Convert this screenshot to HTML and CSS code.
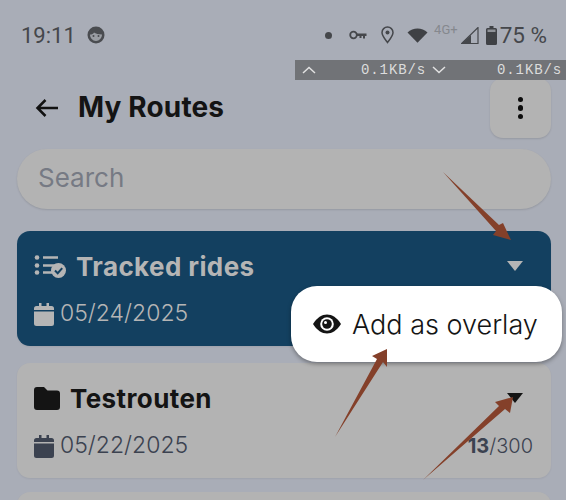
FILE: index.html
```html
<!DOCTYPE html>
<html lang="en">
<head>
    <meta charset="UTF-8">
    <title>My Routes</title>
    <link rel="stylesheet" href="styles.css">
</head>
<body>
<div class="status-bar">
    <span class="status-time">19:11</span>
    <svg class="status-face" width="18" height="18" viewBox="0 0 18 18">
        <circle cx="9" cy="9" r="8.500" fill="#4a4c50"/>
        <path d="M3 8.500c2 0 3.200-.5 4-2 1.500 1.300 4.500 2 8 2 0 3.500-2.700 6.500-6 6.500s-6-3-6-6.500z" fill="#9a9da3"/>
        <circle cx="6.500" cy="10" r="1" fill="#4a4c50"/>
        <circle cx="11.500" cy="10" r="1" fill="#4a4c50"/>
    </svg>
    <span class="status-spacer"></span>
    <span class="status-dot"></span>
    <svg class="status-key" width="18" height="10" viewBox="0 0 18 10">
        <circle cx="4.500" cy="5" r="3.300" fill="none" stroke="#45474b" stroke-width="1.800"/>
        <path d="M8 3.500h9.500v2.500h-1.500v2.500h-2v-2.500h-1.500v2h-2v-2h-2.500z" fill="#45474b"/>
    </svg>
    <svg class="status-pin" width="13" height="18" viewBox="0 0 13 18">
        <path d="M6.500 16.500c-3-4-5.500-6.800-5.500-10a5.500 5.500 0 0 1 11 0c0 3.200-2.500 6-5.500 10z" fill="none" stroke="#45474b" stroke-width="1.500"/>
        <circle cx="6.500" cy="6.500" r="2" fill="#45474b"/>
    </svg>
    <svg class="status-wifi" width="21" height="16" viewBox="0 0 21 16">
        <path d="M0.500 5.500c5.500-5.500 14.500-5.500 20 0l-10 10.300z" fill="#3f4145"/>
    </svg>
    <span class="status-net">4G+</span>
    <svg class="status-signal" width="18" height="17" viewBox="0 0 18 17">
        <path d="M17 0.500v16h-16.500z" fill="none" stroke="#45474b" stroke-width="1.200"/>
        <path d="M10 8v8.500h-9.500z" fill="#45474b"/>
    </svg>
    <svg class="status-battery" width="11" height="19" viewBox="0 0 11 19">
        <path d="M3.500 0h4v2h2a1.500 1.500 0 0 1 1.500 1.500v14a1.500 1.500 0 0 1-1.500 1.500h-8a1.500 1.500 0 0 1-1.500-1.500v-14a1.500 1.500 0 0 1 1.500-1.500h2z" fill="#3f4145"/>
        <rect x="1.500" y="3.500" width="8" height="2.500" fill="#8f9298"/>
    </svg>
    <span class="status-battery-text">75 %</span>
</div>

<div class="speed-bar">
    <svg width="14" height="8" viewBox="0 0 14 8"><path d="M1 7l6-5.500 6 5.500" fill="none" stroke="#e2e2e2" stroke-width="1.500"/></svg>
    <span class="speed-value">0.1KB/s</span>
    <svg width="14" height="8" viewBox="0 0 14 8"><path d="M1 1l6 5.500 6-5.500" fill="none" stroke="#e2e2e2" stroke-width="1.500"/></svg>
    <span class="speed-value">0.1KB/s</span>
</div>

<div class="page">
    <div class="header">
        <svg class="back-icon" width="24" height="20" viewBox="0 0 24 20">
            <path d="M23 10H3M10.500 2l-8 8 8 8" fill="none" stroke="#111" stroke-width="2.500"/>
        </svg>
        <h1>My Routes</h1>
        <button type="button" class="menu-btn">
            <span></span><span></span><span></span>
        </button>
    </div>

    <div class="search">Search</div>

    <div class="route-card route-card-active">
        <div class="route-top">
            <svg class="tracked-icon" width="32" height="24" viewBox="0 0 32 24">
                <circle cx="3" cy="3.500" r="2.300" fill="#b5b5b5"/>
                <circle cx="3" cy="11.500" r="2.300" fill="#b5b5b5"/>
                <circle cx="3" cy="18.500" r="2.300" fill="#b5b5b5"/>
                <path d="M9 3.500h15M9 11.500h13M9 18.500h9" stroke="#b5b5b5" stroke-width="2.500" fill="none"/>
                <circle cx="24.500" cy="16.500" r="7.500" fill="#b5b5b5"/>
                <path d="M21 16.500l2.700 2.700 4.500-5" stroke="#134060" stroke-width="2" fill="none"/>
            </svg>
            <span class="route-name">Tracked rides</span>
            <span class="caret"></span>
        </div>
        <div class="route-bottom">
            <svg width="20" height="23" viewBox="0 0 20 23"><path d="M5 0h2.500v3h5V0H15v3h2.500A2.500 2.500 0 0 1 20 5.500V7H0V5.500A2.500 2.500 0 0 1 2.500 3H5zM0 8.500h20v12a2.500 2.500 0 0 1-2.500 2.500h-15A2.500 2.500 0 0 1 0 20.500z" fill="#b5b5b5"/></svg>
            <span class="route-date">05/24/2025</span>
        </div>
    </div>

    <div class="route-card">
        <div class="route-top">
            <svg class="folder-icon" width="26" height="23" viewBox="0 0 26 23"><path d="M3 0h7l3.500 3.500H23a3 3 0 0 1 3 3V20a3 3 0 0 1-3 3H3a3 3 0 0 1-3-3V3a3 3 0 0 1 3-3z" fill="#141414"/></svg>
            <span class="route-name">Testrouten</span>
            <span class="caret"></span>
        </div>
        <div class="route-bottom">
            <svg width="20" height="23" viewBox="0 0 20 23"><path d="M5 0h2.500v3h5V0H15v3h2.500A2.500 2.500 0 0 1 20 5.500V7H0V5.500A2.500 2.500 0 0 1 2.500 3H5zM0 8.500h20v12a2.500 2.500 0 0 1-2.500 2.500h-15A2.500 2.500 0 0 1 0 20.500z" fill="#3b4250"/></svg>
            <span class="route-date">05/22/2025</span>
            <span class="route-count"><b>13</b>/300</span>
        </div>
    </div>

    <div class="route-card"></div>
</div>

<div class="overlay-menu">
    <svg width="28" height="20" viewBox="0 0 28 20">
        <path d="M0 10C4 3.500 9 .5 14 .5S24 3.500 28 10c-4 6.500-9 9.500-14 9.500S4 16.500 0 10z" fill="#141414"/>
        <circle cx="14" cy="10" r="6.800" fill="#fff"/>
        <circle cx="14" cy="10" r="4.800" fill="#141414"/>
        <circle cx="12.500" cy="8.500" r="1.500" fill="#fff"/>
    </svg>
    <span>Add as overlay</span>
</div>

<svg class="arrows" width="566" height="500" viewBox="0 0 566 500">
    <path d="M443 172L499 225 503 223 511 240 493 235 496 231z" fill="#84402a"/>
    <path d="M335 437L377 359 372 356 387 349 387 367 383 362z" fill="#84402a"/>
    <path d="M423 480L499 406 495 402 513 397 510 413 505 409z" fill="#84402a"/>
</svg>
</body>
</html>
```

FILE: styles.css
```css
* {
    box-sizing: border-box;
    margin: 0;
    padding: 0;
}

body {
    position: relative;
    width: 566px;
    height: 500px;
    overflow: hidden;
    background-color: #a9adb7;
    font-family: 'Inter', 'Liberation Sans', sans-serif;
    color: #141414;
}

/* status bar */
.status-bar {
    display: flex;
    align-items: center;
    height: 70px;
    padding: 0 19px 0 21px;
    color: #45474b;
    font-family: 'Roboto', sans-serif;
}

.status-time {
    font-size: 22px;
    margin-right: 11px;
}

.status-spacer {
    flex: 1;
}

.status-dot {
    width: 7px;
    height: 7px;
    border-radius: 50%;
    background: #45474b;
    margin-right: 17px;
}

.status-key {
    margin-right: 14px;
}

.status-pin {
    margin-right: 13px;
}

.status-wifi {
    margin-right: 6px;
}

.status-net {
    font-size: 13px;
    color: #85888e;
    align-self: flex-start;
    margin-top: 22px;
    margin-right: 3px;
}

.status-signal {
    margin-right: 7px;
}

.status-battery {
    margin-right: 3px;
}

.status-battery-text {
    font-size: 22.500px;
}

.speed-bar {
    position: absolute;
    top: 60px;
    left: 295px;
    right: 0;
    height: 20px;
    display: flex;
    align-items: center;
    padding-left: 7px;
    background: #717377;
    color: #dcdcdc;
    font-family: 'Liberation Mono', monospace;
    font-size: 14px;
}

.speed-value {
    width: 59px;
    margin-left: 45px;
    margin-right: 12px;
    letter-spacing: 0.9px;
    white-space: nowrap;
}

.speed-value:last-child {
    margin-left: 51px;
}

.speed-bar svg {
    flex: none;
}

/* page */
.page {
    display: flex;
    flex-direction: column;
    height: 430px;
    overflow: hidden;
    padding: 8px 15px 0 17px;
}

.header {
    display: flex;
    align-items: center;
    height: 60px;
    margin-bottom: 11px;
}

.back-icon {
    margin-left: 18px;
    margin-right: 19px;
}

h1 {
    flex: 1;
    font-size: 28px;
    line-height: 58px;
    height: 60px;
    font-weight: 700;
    letter-spacing: 0.15px;
}

.menu-btn {
    width: 61px;
    height: 60px;
    display: flex;
    flex-direction: column;
    align-items: center;
    justify-content: center;
    gap: 3px;
    border: none;
    border-radius: 13px;
    background: #b3b3b3;
    box-shadow: 0 1px 2px rgba(0, 0, 0, 0.12);
}

.menu-btn span {
    width: 5.500px;
    height: 5.500px;
    border-radius: 50%;
    background: #0c0c0c;
}

.search {
    flex: none;
    height: 60px;
    line-height: 58px;
    padding-left: 21px;
    border-radius: 30px;
    background: #b3b3b3;
    box-shadow: 0 1px 2px rgba(0, 0, 0, 0.12);
    color: #767a84;
    font-size: 26px;
    margin-bottom: 22px;
}

.route-card {
    flex: none;
    height: 115px;
    padding: 20px 18px 0 17px;
    border-radius: 13px;
    background: #b3b3b3;
    box-shadow: 0 1px 2px rgba(0, 0, 0, 0.06);
    margin-bottom: 14px;
}

.route-card-active {
    background: #134060;
    color: #b5b5b5;
    margin-bottom: 17px;
}

.route-top {
    display: flex;
    align-items: center;
    height: 30px;
}

.route-name {
    flex: 1;
    font-size: 26px;
    font-weight: 700;
    letter-spacing: 0.4px;
    margin-left: 10px;
}

.caret {
    width: 0;
    height: 0;
    margin-right: 10px;
    border-left: 8px solid transparent;
    border-right: 8px solid transparent;
    border-top: 10px solid currentColor;
}

.route-bottom {
    display: flex;
    align-items: center;
    margin-top: 19px;
    height: 28px;
}

.route-date {
    margin-left: 6px;
    margin-top: -2px;
    font-size: 23px;
    font-weight: 300;
    color: #b5b5b5;
}

.route-card:not(.route-card-active) .route-date {
    color: #3b4250;
}

.route-count {
    margin-left: auto;
    font-size: 20px;
    font-weight: 300;
    color: #3b4250;
}

.route-count b {
    font-weight: 700;
}

/* popup over the list */
.overlay-menu {
    position: absolute;
    top: 286px;
    left: 291px;
    width: 271px;
    height: 76px;
    display: flex;
    align-items: center;
    gap: 11px;
    padding-left: 22px;
    border-radius: 26px;
    background: #fff;
    box-shadow: 0 2px 4px rgba(0, 0, 0, 0.35);
    font-size: 27px;
    font-weight: 300;
    color: #141414;
}

.arrows {
    position: absolute;
    top: 0;
    left: 0;
}
```
